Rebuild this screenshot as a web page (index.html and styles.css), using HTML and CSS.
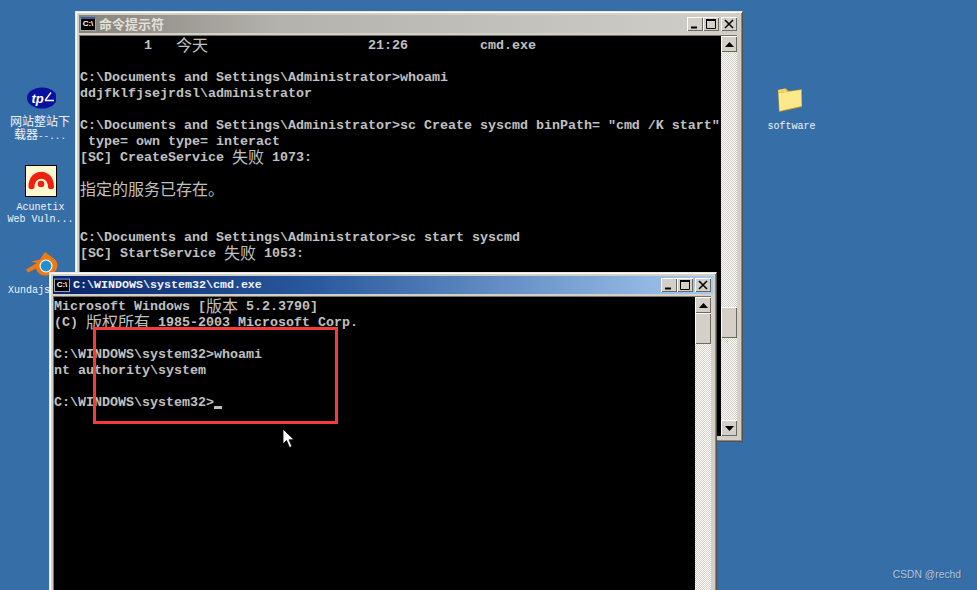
FILE: index.html
```html
<!DOCTYPE html>
<html lang="zh">
<head>
<meta charset="utf-8">
<title>命令提示符</title>
<link rel="stylesheet" href="styles.css">
</head>
<body>
<main class="desktop">
  <div class="icon icon-tp">
    <svg class="icon-art" width="32" height="32" viewBox="0 0 32 32"><ellipse cx="18" cy="14" rx="15" ry="10.500" fill="#0a10a0"/><text x="7.500" y="19" class="tp-text">tp</text><path d="M21 16.500L27 8.500M21 16.500H30" stroke="#fff" stroke-width="1.300" fill="none"/></svg>
    <div class="icon-label">网站整站下<br>载器<span class="label-small">--...</span></div>
  </div>
  <div class="icon icon-acu">
    <svg class="icon-art" width="32" height="32" viewBox="0 0 32 32"><rect x=".5" y=".5" width="31" height="31" fill="#fff8d0" stroke="#000"/><path d="M3.500 22C3 1.500 29.500 1.500 29 22 29 25 23 25 23 22 23 11 9.500 11 9.500 22 9.500 25 3.500 25 3.500 22Z" fill="#ee2010"/><circle cx="16" cy="19" r="3.300" fill="#ee2010"/></svg>
    <div class="icon-label">Acunetix<br>Web Vuln...</div>
  </div>
  <div class="icon icon-blender">
    <svg class="icon-art" width="34" height="32" viewBox="0 0 34 32"><path d="M1 21.500L12 15 6 13.500 15 11.500 20 4 30 11.500C35 16.500 32 26.500 22 27.500 16 28.500 12 24.500 11 20.500L3 24.500Z" fill="#ee7a10"/><circle cx="21" cy="18" r="6.500" fill="#fff"/><circle cx="21" cy="18" r="5.400" fill="#2290d0"/></svg>
    <div class="icon-label">Xundajs</div>
  </div>
  <div class="icon icon-folder">
    <svg class="icon-art" width="32" height="32" viewBox="0 0 32 32"><path d="M3 6L11 4.500 14 7 27 5 27 23 4 28Z" fill="#c9982c"/><path d="M3.500 9L26 6 26.500 22 4.500 27Z" fill="#fde98c"/><path d="M3 6L10 4.500 13 7.500 3.500 9Z" fill="#f7d264"/></svg>
    <div class="icon-label">software</div>
  </div>

  <section class="window window-back">
    <header class="titlebar titlebar-inactive">
      <span class="cmd-icon">C:\</span>
      <span class="title-text title-cjk">命令提示符</span>
      <span class="btns">
        <span class="btn"><svg width="14" height="12" viewBox="0 0 14 12"><path d="M3 9.500H9" stroke="#000" stroke-width="2"/></svg></span>
        <span class="btn"><svg width="14" height="12" viewBox="0 0 14 12"><path d="M2.500 2H11.500V10.500H2.500Z" stroke="#000" fill="none"/><path d="M2 2H12" stroke="#000" stroke-width="2"/></svg></span>
        <span class="btn btn-close"><svg width="14" height="12" viewBox="0 0 14 12"><path d="M3 2L11 10M11 2L3 10" stroke="#000" stroke-width="1.600"/></svg></span>
      </span>
    </header>
    <div class="client">
      <pre class="console">        1   <span class="cjk">今天</span>                    21:26         cmd.exe

C:\Documents and Settings\Administrator&gt;whoami
ddjfklfjsejrdsl\administrator

C:\Documents and Settings\Administrator&gt;sc Create syscmd binPath= "cmd /K start"
 type= own type= interact
[SC] CreateService <span class="cjk">失败</span> 1073:

<span class="cjk">指定的服务已存在。</span>


C:\Documents and Settings\Administrator&gt;sc start syscmd
[SC] StartService <span class="cjk">失败</span> 1053:</pre>
      <div class="scrollbar">
        <span class="sb-btn"><svg width="9" height="5" viewBox="0 0 9 5"><path d="M4.500 0L9 5H0Z"/></svg></span>
        <span class="sb-track sb-track-back"><span class="sb-thumb"></span></span>
        <span class="sb-btn"><svg width="9" height="5" viewBox="0 0 9 5"><path d="M0 0H9L4.500 5Z"/></svg></span>
      </div>
    </div>
  </section>

  <section class="window window-front">
    <header class="titlebar titlebar-active">
      <span class="cmd-icon">C:\</span>
      <span class="title-text title-mono">C:\WINDOWS\system32\cmd.exe</span>
      <span class="btns">
        <span class="btn"><svg width="14" height="12" viewBox="0 0 14 12"><path d="M3 9.500H9" stroke="#000" stroke-width="2"/></svg></span>
        <span class="btn"><svg width="14" height="12" viewBox="0 0 14 12"><path d="M2.500 2H11.500V10.500H2.500Z" stroke="#000" fill="none"/><path d="M2 2H12" stroke="#000" stroke-width="2"/></svg></span>
        <span class="btn btn-close"><svg width="14" height="12" viewBox="0 0 14 12"><path d="M3 2L11 10M11 2L3 10" stroke="#000" stroke-width="1.600"/></svg></span>
      </span>
    </header>
    <div class="client">
      <pre class="console">Microsoft Windows [<span class="cjk">版本</span> 5.2.3790]
(C) <span class="cjk">版权所有</span> 1985-2003 Microsoft Corp.

C:\WINDOWS\system32&gt;whoami
nt authority\system

C:\WINDOWS\system32&gt;<span class="caret"></span></pre>
      <div class="scrollbar">
        <span class="sb-btn"><svg width="9" height="5" viewBox="0 0 9 5"><path d="M4.500 0L9 5H0Z"/></svg></span>
        <span class="sb-track"><span class="sb-thumb"></span></span>
      </div>
    </div>
  </section>

  <div class="highlight"></div>
  <svg class="cursor" width="13" height="21" viewBox="0 0 13 21"><path d="M1 1V16L4.500 12.500 7.500 19.500 10 18.500 7 11.800H12Z" fill="#fff" stroke="#000" stroke-width=".8"/></svg>
  <div class="watermark">CSDN @rechd</div>
</main>
</body>
</html>
```

FILE: styles.css
```css
* { box-sizing: border-box; }
html, body { margin: 0; padding: 0; }
body { width: 977px; height: 590px; overflow: hidden; }

.desktop {
  position: relative;
  width: 977px;
  height: 590px;
  overflow: hidden;
  background: #366ea8;
  font-family: "Liberation Mono", "Noto Sans CJK SC", monospace;
}

/* desktop icons */
.icon {
  position: absolute;
  width: 76px;
  display: flex;
  flex-direction: column;
  align-items: center;
  color: #fff;
}
.icon-art { display: block; flex: none; }
.icon-label {
  margin-top: 4px;
  font: 10px/12px "Liberation Mono", "Noto Sans CJK SC", monospace;
  text-align: center;
  white-space: nowrap;
  color: #eef4fa;
}
.label-small { font-size: 9.330px; }
.icon-tp { left: 2px; top: 84px; }
.icon-tp .icon-label { font-size: 12px; line-height: 13px; margin-top: 1px; }
.icon-acu { left: 3px; top: 165px; }
.icon-acu .icon-label { margin: 5px 0 0 -1px; }
.icon-blender { left: 2px; top: 248px; align-items: flex-start; }
.icon-blender .icon-art { margin-left: 23px; }
.icon-blender .icon-label { margin: 5px 0 0 6px; }
.icon-folder { left: 753px; top: 84px; }
.icon-folder .icon-label { margin: 5px 0 0 1px; }
.tp-text { font: italic bold 13px "Liberation Sans", sans-serif; fill: #fff; }

/* windows */
.window {
  position: absolute;
  display: flex;
  flex-direction: column;
  background: #d4d0c8;
  border: 1px solid #55524c;
  border-top-color: #e8e6e0;
  border-left-color: #e8e6e0;
  padding: 3px 5px 5px 3px;
  box-shadow: inset 1px 1px 0 #fff, inset -1px -1px 0 #8a8780;
}
.window-back { left: 75px; top: 11px; width: 668px; height: 431px; }
.window-front { left: 49px; top: 272px; width: 668px; height: 330px; }

.titlebar {
  flex: none;
  height: 18px;
  margin-right: -2px;
  margin-bottom: 2px;
  display: flex;
  align-items: center;
  gap: 3px;
  padding: 0 2px 0 1px;
}
.titlebar-inactive { background: linear-gradient(90deg, #85827c 0%, #b4b2ac 30%, #d0cfca 100%); }
.titlebar-active { background: linear-gradient(90deg, #0a246a 0%, #2a5a9e 40%, #a6caf0 100%); }

.cmd-icon {
  flex: none;
  width: 16px;
  height: 14px;
  background: #000;
  border: 1px solid #9aa;
  border-top-width: 2px;
  border-top-color: #3a5a9a;
  color: #fff;
  font: bold 8px/10px "Liberation Sans", sans-serif;
  text-align: center;
  overflow: hidden;
}
.title-text { flex: 1; font-weight: bold; white-space: nowrap; }
.title-cjk { font: bold 13px/16px "Noto Sans CJK SC", sans-serif; color: #e2e0da; }
.title-mono { font: bold 11.670px/16px "Liberation Mono", monospace; color: #f0f4fa; }

.btns { flex: none; display: flex; align-items: center; }
.btn {
  width: 16px;
  height: 14px;
  display: flex;
  align-items: center;
  justify-content: center;
  background: #d4d0c8;
  box-shadow: inset 1px 1px 0 #fff, inset -1px -1px 0 #6b6860;
}
.btn-close { margin-left: 2px; }

/* client area */
.client {
  flex: 1;
  min-height: 0;
  display: flex;
  background: #000;
  border-top: 1px solid #77746c;
  border-left: 1px solid #77746c;
}
.console {
  flex: 1;
  min-width: 0;
  margin: 0;
  padding: 2px 0 0;
  overflow: hidden;
  font: bold 13.333px/16px "Liberation Mono", "Noto Sans CJK SC", monospace;
  color: #c0c0c0;
  background: #000;
}
.cjk {
  display: inline-block;
  height: 16px;
  vertical-align: top;
  font: 400 16px/12px "Noto Sans CJK SC", sans-serif;
}
.caret {
  display: inline-block;
  width: 8px;
  height: 3px;
  background: #c0c0c0;
  vertical-align: -3px;
}

/* scrollbars */
.scrollbar {
  flex: none;
  width: 16px;
  display: flex;
  flex-direction: column;
  background: repeating-conic-gradient(#d4d0c8 0 25%, #fff 0 50%) 0 0 / 2px 2px;
}
.sb-btn {
  flex: none;
  height: 16px;
  display: flex;
  align-items: center;
  justify-content: center;
  background: #d4d0c8;
  box-shadow: inset 1px 1px 0 #fff, inset -1px -1px 0 #6b6860;
}
.sb-btn svg { fill: #000; }
.sb-track { flex: 1; display: block; }
.sb-track-back { padding-top: 255px; }
.sb-thumb {
  display: block;
  width: 16px;
  height: 31px;
  background: #d4d0c8;
  box-shadow: inset 1px 1px 0 #fff, inset -1px -1px 0 #6b6860;
}

/* overlays */
.highlight {
  position: absolute;
  left: 93px;
  top: 327px;
  width: 245px;
  height: 97px;
  border: 3px solid #f23c3c;
}
.cursor { position: absolute; left: 282px; top: 428px; }
.watermark {
  position: absolute;
  right: 16px;
  bottom: 8px;
  font: 10.300px/14px "Liberation Sans", sans-serif;
  color: #b4c6da;
  text-shadow: 1px 1px 0 #2c5a8c;
}
```
